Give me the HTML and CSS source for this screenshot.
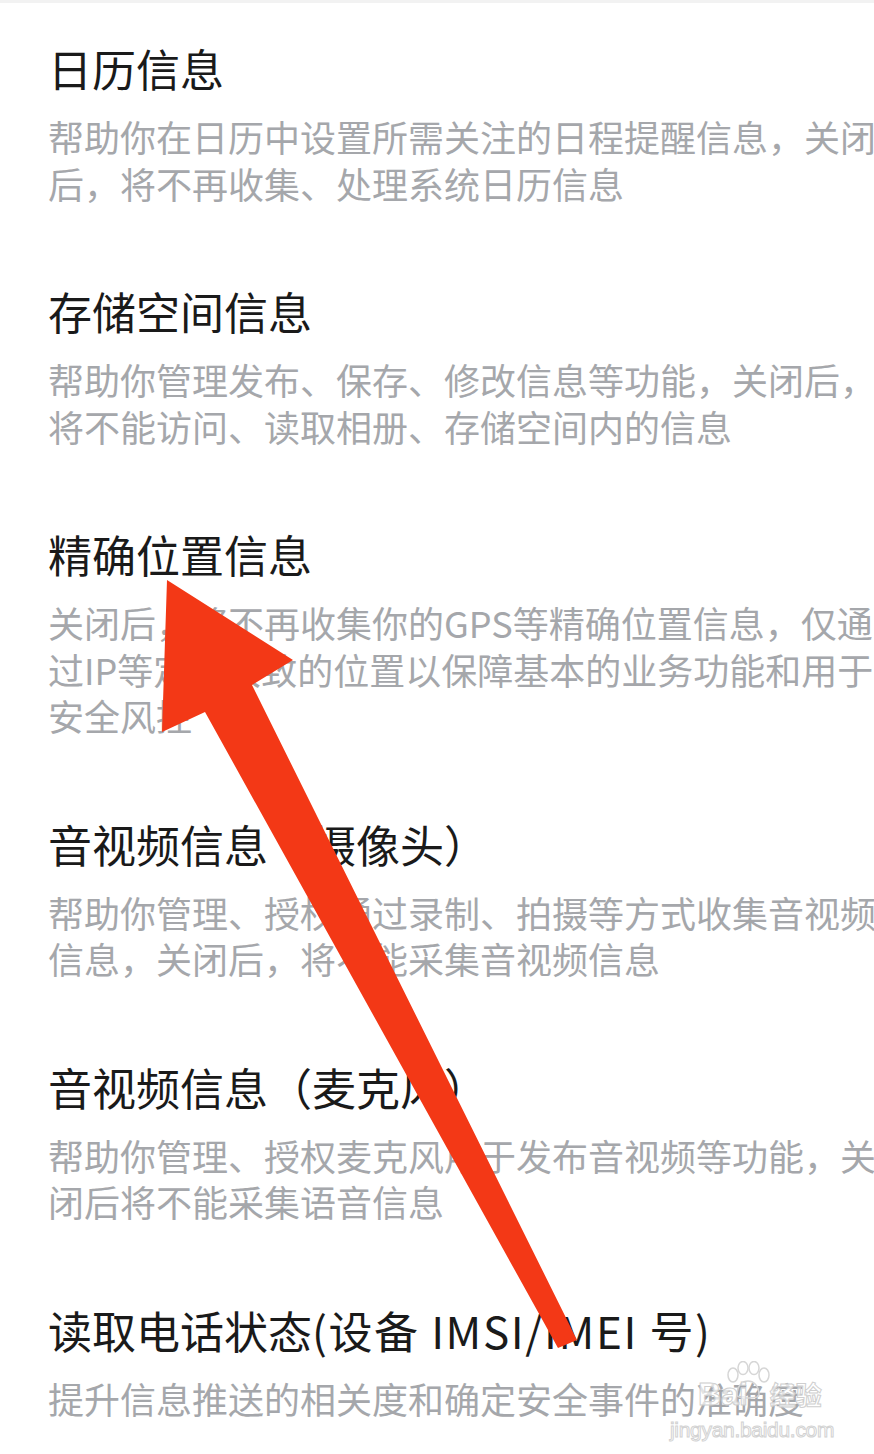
FILE: index.html
```html
<!DOCTYPE html>
<html lang="zh-CN">
<head>
    <meta charset="UTF-8">
    <meta name="viewport" content="width=device-width, initial-scale=1.0">
    <title>权限设置</title>
    <link rel="stylesheet" href="styles.css">
</head>
<body>
    <div class="page">
        <div class="perm-list">
            <div class="perm-item">
                <div class="perm-title">日历信息</div>
                <div class="perm-desc">帮助你在日历中设置所需关注的日程提醒信息，关闭<br>后，将不再收集、处理系统日历信息</div>
            </div>
            <div class="perm-item">
                <div class="perm-title">存储空间信息</div>
                <div class="perm-desc">帮助你管理发布、保存、修改信息等功能，关闭后，<br>将不能访问、读取相册、存储空间内的信息</div>
            </div>
            <div class="perm-item">
                <div class="perm-title">精确位置信息</div>
                <div class="perm-desc">关闭后，将不再收集你的GPS等精确位置信息，仅通<br>过IP等定位大致的位置以保障基本的业务功能和用于<br>安全风控</div>
            </div>
            <div class="perm-item">
                <div class="perm-title">音视频信息（摄像头）</div>
                <div class="perm-desc">帮助你管理、授权通过录制、拍摄等方式收集音视频<br>信息，关闭后，将不能采集音视频信息</div>
            </div>
            <div class="perm-item">
                <div class="perm-title">音视频信息（麦克风）</div>
                <div class="perm-desc">帮助你管理、授权麦克风用于发布音视频等功能，关<br>闭后将不能采集语音信息</div>
            </div>
            <div class="perm-item">
                <div class="perm-title">读取电话状态<span class="latin">(设备 IMSI/IMEI 号)</span></div>
                <div class="perm-desc">提升信息推送的相关度和确定安全事件的准确度</div>
            </div>
        </div>

        <!-- red annotation arrow drawn over the list -->
        <svg class="arrow" width="874" height="1454" viewBox="0 0 874 1454">
            <polygon points="167,580 293,660 252,685 577,1340 558,1348 205,712 162,732" fill="#f33816"/>
        </svg>

        <div class="watermark">
            <svg class="paw" width="50" height="40" viewBox="0 0 50 40">
                <ellipse cx="10" cy="14" rx="5" ry="7" fill="none" stroke="#d6d6d6" stroke-width="1.5"/>
                <ellipse cx="20" cy="7" rx="5" ry="6.5" fill="none" stroke="#d6d6d6" stroke-width="1.5"/>
                <ellipse cx="31" cy="7" rx="5" ry="6.5" fill="none" stroke="#d6d6d6" stroke-width="1.5"/>
                <ellipse cx="41" cy="14" rx="5" ry="7" fill="none" stroke="#d6d6d6" stroke-width="1.5"/>
                <path d="M14 34 C14 24 20 20 25 20 C30 20 36 24 36 34 C36 38 14 38 14 34 Z" fill="none" stroke="#d6d6d6" stroke-width="1.5"/>
            </svg>
            <div class="wm-brand"><span class="wm-bai">Bai</span><span class="wm-jy">经验</span></div>
            <div class="wm-url">jingyan.baidu.com</div>
        </div>
    </div>
</body>
</html>
```

FILE: styles.css
```css
html, body {
    margin: 0;
    padding: 0;
    background: #fff;
    overflow: hidden;
}
body {
    font-family: "Noto Sans CJK SC", "Noto Sans", sans-serif;
}
.page {
    position: relative;
    width: 874px;
    height: 1454px;
    border-top: 3px solid #f2f2f2;
    box-sizing: border-box;
}
.perm-list {
    padding-left: 48px;
    width: 860px;
}
.perm-item {
    padding: 37px 0 40px;
}
.perm-title {
    font-size: 44px;
    line-height: 56px;
    color: #1a1a1a;
    white-space: nowrap;
}
.perm-title .latin {
    letter-spacing: 1.6px;
}
.perm-desc {
    margin-top: 17px;
    font-size: 36px;
    line-height: 46.5px;
    color: #a5a7ab;
    white-space: nowrap;
}
.arrow {
    position: absolute;
    left: 0;
    top: -3px;
    pointer-events: none;
}
.watermark {
    position: absolute;
    left: 668px;
    top: 1355px;
    width: 190px;
    white-space: nowrap;
}
.paw {
    position: absolute;
    left: 55px;
    top: 3px;
}
.wm-brand {
    padding: 18px 0 0 30px;
    line-height: 36px;
    font-family: "Liberation Sans", sans-serif;
    font-weight: bold;
    color: rgba(255, 255, 255, 0.7);
    -webkit-text-stroke: 1px #cfcfcf;
    position: relative;
}
.wm-bai {
    font-size: 32px;
}
.wm-jy {
    margin-left: 22px;
    font-size: 26px;
    font-family: "Noto Sans CJK SC", sans-serif;
}
.wm-url {
    padding-left: 2px;
    line-height: 24px;
    font-family: "Liberation Sans", sans-serif;
    font-size: 21px;
    letter-spacing: -0.3px;
    color: rgba(255, 255, 255, 0.7);
    -webkit-text-stroke: 1px #d2d2d2;
}
```
